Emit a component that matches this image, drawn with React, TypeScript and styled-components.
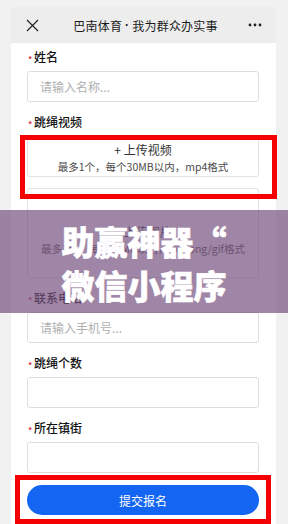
import React from "react";
import styled, { createGlobalStyle } from "styled-components";

const Global = createGlobalStyle`
  html, body { margin: 0; padding: 0; background: #f1f1f1; }
  body { font-family: "Noto Sans CJK SC", "Noto Sans", sans-serif; }
  * { box-sizing: border-box; }
`;

const Page = styled.div`
  position: relative;
  width: 288px;
  height: 524px;
  overflow: hidden;
  background: #f1f1f1;
  padding: 7px 12px 0 11px;
`;

const Phone = styled.div`
  background: #fff;
  height: 540px;
  display: flex;
  flex-direction: column;
`;

const Header = styled.div`
  height: 36px;
  background: #ededed;
  display: flex;
  align-items: center;
  justify-content: space-between;
  padding: 0 14px 0 14px;
  color: #1a1a1a;
`;

const Title = styled.div`
  font-size: 12px;
  color: #1a1a1a;
  letter-spacing: 0.2px;
  margin-left: 4px;
  display: flex;
  align-items: center;
`;

const Dot = styled.span`
  font-family: "Liberation Sans", sans-serif;
  font-weight: 700;
  margin: 0 3px;
`;

const IconBox = styled.div`
  width: 14px;
  height: 14px;
  display: flex;
  align-items: center;
  justify-content: center;
`;

const Form = styled.div`
  display: flex;
  flex-direction: column;
  gap: 11px;
  padding: 5px 17px 0 16px;
`;

const Field = styled.div`
  display: flex;
  flex-direction: column;
  gap: 5px;
`;

const Label = styled.div`
  height: 18px;
  line-height: 18px;
  font-size: 12px;
  font-weight: 500;
  color: #111;
  display: flex;
  align-items: center;
`;

const Star = styled.span`
  color: #d8262e;
  font-size: 9px;
  width: 6px;
  margin-left: 1px;
  margin-top: 5px;
  display: inline-block;
  line-height: 1;
`;

const Input = styled.div`
  height: 31px;
  border: 1px solid #dedede;
  border-radius: 3px;
  display: flex;
  align-items: center;
  padding-left: 12px;
  font-size: 12px;
  color: #b0b0b0;
`;

const Upload = styled.div<{ $h: number; $pt: number }>`
  height: ${(p) => p.$h}px;
  border: 1px solid #e2e2e2;
  border-radius: 3px;
  display: flex;
  flex-direction: column;
  align-items: center;
  padding-top: ${(p) => p.$pt}px;
  gap: 1px;
`;

const UploadTitle = styled.div`
  font-size: 12px;
  color: #333;
  line-height: 16px;
`;

const UploadHint = styled.div`
  font-size: 10.5px;
  color: #4a4a4a;
  line-height: 15px;
  white-space: nowrap;
`;

const Uploads = styled.div`
  display: flex;
  flex-direction: column;
  gap: 11px;
`;

const Submit = styled.div`
  margin-top: 1px;
  height: 30px;
  border-radius: 15px;
  background: #1465f2;
  color: #fff;
  font-size: 12px;
  display: flex;
  align-items: center;
  justify-content: center;
`;

const RedBox = styled.div<{ $x: number; $y: number; $w: number; $h: number }>`
  position: absolute;
  left: ${(p) => p.$x}px;
  top: ${(p) => p.$y}px;
  width: ${(p) => p.$w}px;
  height: ${(p) => p.$h}px;
  border: 5px solid #f40000;
  pointer-events: none;
`;

const Banner = styled.div`
  position: absolute;
  left: 0;
  top: 210px;
  width: 288px;
  height: 103px;
  background: rgba(120, 82, 128, 0.7);
  display: flex;
  flex-direction: column;
  align-items: center;
  justify-content: center;
  padding-top: 2px;
`;

const BannerLine = styled.div`
  font-family: "Noto Sans CJK SC", sans-serif;
  font-weight: 900;
  font-size: 33px;
  line-height: 44px;
  color: #fff;
  white-space: nowrap;
  -webkit-text-stroke: 0.6px #fff;
`;

const fields = [
  { label: "联系电话", placeholder: "请输入手机号..." },
  { label: "跳绳个数", placeholder: "" },
  { label: "所在镇街", placeholder: "" },
];

export default function App() {
  return (
    <>
      <Global />
      <Page>
        <Phone>
          <Header>
            <IconBox>
              <svg width="13" height="13" viewBox="0 0 13 13">
                <path d="M1 1 L12 12 M12 1 L1 12" stroke="#222" strokeWidth="1.2" />
              </svg>
            </IconBox>
            <Title>
              巴南体育<Dot>·</Dot>我为群众办实事
            </Title>
            <IconBox>
              <svg width="14" height="4" viewBox="0 0 14 4">
                <circle cx="2" cy="2" r="1.4" fill="#222" />
                <circle cx="7" cy="2" r="1.4" fill="#222" />
                <circle cx="12" cy="2" r="1.4" fill="#222" />
              </svg>
            </IconBox>
          </Header>
          <Form>
            <Field>
              <Label>
                <Star>*</Star>姓名
              </Label>
              <Input>请输入名称...</Input>
            </Field>
            <Field>
              <Label>
                <Star>*</Star>跳绳视频
              </Label>
              <Uploads>
                <Upload $h={41} $pt={5}>
                  <UploadTitle>+ 上传视频</UploadTitle>
                  <UploadHint>最多1个，每个30MB以内，mp4格式</UploadHint>
                </Upload>
                <Upload $h={90} $pt={35}>
                  <UploadTitle>+ 上传图片</UploadTitle>
                  <UploadHint>最多1个，每个10MB以内，jpg/png/gif格式</UploadHint>
                </Upload>
              </Uploads>
            </Field>
            {fields.map((f) => (
              <Field key={f.label}>
                <Label>
                  <Star>*</Star>
                  {f.label}
                </Label>
                <Input>{f.placeholder}</Input>
              </Field>
            ))}
            <Submit>提交报名</Submit>
          </Form>
        </Phone>
        <RedBox $x={20} $y={135} $w={257} $h={64} />
        <RedBox $x={15} $y={475} $w={256} $h={49} />
        <Banner>
          <BannerLine>助赢神器“</BannerLine>
          <BannerLine>微信小程序</BannerLine>
        </Banner>
      </Page>
    </>
  );
}
